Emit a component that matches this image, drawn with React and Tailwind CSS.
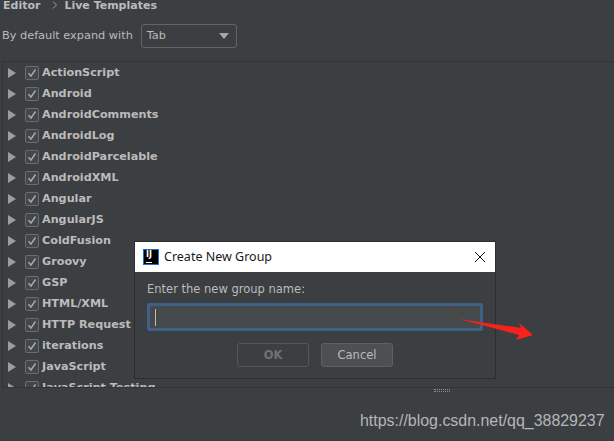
const items = ["ActionScript","Android","AndroidComments","AndroidLog","AndroidParcelable","AndroidXML","Angular","AngularJS","ColdFusion","Groovy","GSP","HTML/XML","HTTP Request","iterations","JavaScript","JavaScript Testing"];
const font = { fontFamily: '"DejaVu Sans", sans-serif' };

function Row({ name }) {
  return (
    <div className="h-[21px] shrink-0 flex items-center">
      <svg width="8" height="10" viewBox="0 0 8 10" className="ml-[5px] mr-[9px] shrink-0"><path d="M0 0L8 5L0 10Z" fill="#9b9d9f" /></svg>
      <div className="w-[14px] h-[14px] mr-[3px] shrink-0 border border-[#6b6d6f] rounded-[2px] bg-[#43474a] flex items-center justify-center">
        <svg width="10" height="10" viewBox="0 0 10 10"><path d="M1.5 5.2L4 8L8.5 1.5" fill="none" stroke="#a9abad" strokeWidth="1.4" /></svg>
      </div>
      <span className="text-[11.2px] pt-[2px] font-bold text-[#bbbbbb] whitespace-nowrap">{name}</span>
    </div>
  );
}

export default function App() {
  return (
    <div className="relative w-[614px] h-[441px] overflow-hidden bg-[#3c3f41] text-[#bbbbbb]" style={font}>
      <div className="h-[10px] pl-[3px] flex items-center text-[11px] font-bold leading-none">
        <span>Editor</span>
        <svg width="6" height="8" viewBox="0 0 6 8" className="ml-[12px] mr-[6px]"><path d="M1 0.5L4.5 4L1 7.5" fill="none" stroke="#9a9c9e" /></svg>
        <span>Live Templates</span>
      </div>
      <div className="mt-[14px] pl-[2px] h-[24px] flex items-center gap-[8px] text-[11.3px]">
        <span>By default expand with</span>
        <div className="w-[96px] h-[24px] border border-[#646464] rounded-[3px] flex items-center justify-between pl-[5px] pr-[6px] bg-[#3c3f41]">
          <span>Tab</span>
          <svg width="10" height="6" viewBox="0 0 10 6" className="mr-[1px]"><path d="M0 0H10L5 6Z" fill="#a5a7a9" /></svg>
        </div>
      </div>
      <div className="mt-[13px] ml-[2px] h-[327px] border-l border-t border-b border-[#323436] overflow-hidden flex flex-col">
        {items.map((n) => <Row key={n} name={n} />)}
      </div>
      <div className="flex justify-center mt-[1px]">
        <div className="w-[16px] h-[3px] border-y border-dotted border-[#8a8c8e] ml-[270px]" />
      </div>

      <div className="absolute left-[134px] top-[241px] w-[362px] h-[138px] border border-[#2b2d2f] bg-[#3c3f41] flex flex-col">
        <div className="h-[30px] bg-white flex items-center pl-[8px] pr-[9px] text-[#1a1a1a]">
          <div className="w-[16px] h-[16px] bg-black border border-[#1d6fd0] relative mr-[5px] shrink-0">
            <span className="absolute left-[2px] top-[1px] text-[8px] font-bold text-white leading-[8px]">IJ</span>
            <span className="absolute left-[2px] bottom-[1px] w-[6px] h-[1px] bg-white" />
          </div>
          <span className="text-[12.5px]" style={{ fontFamily: '"Noto Sans", sans-serif' }}>Create New Group</span>
          <svg width="12" height="12" viewBox="0 0 12 12" className="ml-auto"><path d="M1 1L11 11M11 1L1 11" stroke="#111" strokeWidth="1" fill="none" /></svg>
        </div>
        <div className="px-[12px] pt-[9px] flex flex-col">
          <span className="text-[11.5px] leading-[16px]">Enter the new group name:</span>
          <div className="mt-[6px] h-[28px] border-[3px] border-[#3f6186] rounded-[2px] bg-[#45494a] flex items-center pl-[5px]">
            <div className="w-[1px] h-[17px] bg-[#bbbbbb]" />
          </div>
          <div className="mt-[12px] flex pl-[90px] gap-[12px]">
            <div className="w-[72px] h-[24px] pt-[1px] border border-[#55585a] rounded-[3px] flex items-center justify-center text-[11.5px] font-bold text-[#6f7173]">OK</div>
            <div className="w-[72px] h-[24px] pt-[1px] border border-[#5e6163] rounded-[3px] bg-[#4c5052] flex items-center justify-center text-[11.5px] text-[#bbbbbb]">Cancel</div>
          </div>
        </div>
      </div>

      <svg className="absolute left-[455px] top-[315px]" width="82" height="30" viewBox="0 0 82 30">
        <path d="M4 4L66 13L64 8L78 20L61 25L64 20Z" fill="#f8211c" />
      </svg>

      <span className="absolute left-[360px] top-[411px] text-[15.95px] leading-[20px] text-[#b4b6b8] whitespace-nowrap" style={{ fontFamily: '"Liberation Sans", sans-serif' }}>https://blog.csdn.net/qq_38829237</span>
    </div>
  );
}
